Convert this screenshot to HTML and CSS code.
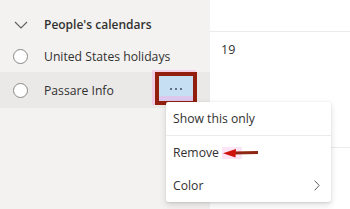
FILE: index.html
```html
<!DOCTYPE html>
<html>
<head>
<meta charset="utf-8">
<link rel="stylesheet" href="styles.css">
</head>
<body>
<div class="app">
  <aside class="sidebar">
    <div class="group-head">
      <svg class="chev" width="14" height="8" viewBox="0 0 14 8"><path d="M1 1 L7 7 L13 1" fill="none" stroke="#605e5c" stroke-width="1.1"/></svg>
      <span class="group-title">People's calendars</span>
    </div>
    <div class="cal-row">
      <span class="radio"></span>
      <span class="cal-name">United States holidays</span>
    </div>
    <div class="cal-row selected">
      <span class="radio"></span>
      <span class="cal-name">Passare Info</span>
      <span class="more-btn"><span class="more-inner"><i></i><i></i><i></i></span></span>
    </div>
  </aside>
  <main class="calendar">
    <div class="cal-header"></div>
    <div class="day-cell"><span class="day-num">19</span></div>
    <div class="day-cell second"></div>
  </main>
</div>
<div class="menu">
  <div class="menu-item divided">Show this only</div>
  <div class="menu-item">Remove</div>
  <div class="menu-item">Color
    <svg class="sub-chev" width="6" height="11" viewBox="0 0 6 11"><path d="M0.6 0.6 L5.2 5.5 L0.6 10.4" fill="none" stroke="#605e5c" stroke-width="1"/></svg>
  </div>
</div>
<svg class="arrow" width="40" height="16" viewBox="0 0 40 16">
  <rect x="1" y="2" width="20" height="12" fill="#fbd3f0" opacity="0.6"/>
  <path d="M12 8 L37 7.6" stroke="#8e2712" stroke-width="3" fill="none"/>
  <path d="M2 8.2 L15 4 L14.5 12.5 Z" fill="#d0140c"/>
</svg>
</body>
</html>
```
FILE: styles.css
```css
* { box-sizing: border-box; }
html, body { margin: 0; padding: 0; }
body {
  width: 350px;
  height: 209px;
  overflow: hidden;
  background: #ffffff;
  font-family: "Open Sans", "Noto Sans", sans-serif;
  color: #323130;
  position: relative;
}
.app {
  display: flex;
  height: 209px;
  overflow: hidden;
}
.sidebar {
  width: 210px;
  flex: none;
  background: #f3f2f1;
  padding-top: 8px;
}
.group-head {
  height: 32px;
  display: flex;
  align-items: center;
  padding-left: 14px;
}
.chev { margin-right: 16px; margin-top: 1px; }
.group-title {
  font-weight: 600;
  font-size: 12px;
}
.cal-row {
  height: 33px;
  display: flex;
  align-items: center;
  padding-left: 13px;
  font-size: 12.2px;
}
.cal-row.selected {
  background: #eae9e8;
  height: 36px;
  margin-top: -1px;
}
.radio {
  width: 15px;
  height: 15px;
  border-radius: 50%;
  border: 1px solid #8a8886;
  background: #ffffff;
  margin-right: 16px;
  flex: none;
}
.more-btn {
  margin-left: auto;
  margin-right: 13px;
  align-self: flex-start;
  width: 42px;
  height: 33px;
  border: 4px solid #921f0d;
  box-shadow: -2px -1px 0 1px rgba(250, 170, 225, 0.45);
  display: flex;
}
.more-inner {
  flex: 1;
  background: linear-gradient(#c7dff3 80%, #dcc8ec 80%);
  display: flex;
  align-items: center;
  justify-content: center;
  gap: 3px;
}
.more-inner i {
  width: 2px;
  height: 2px;
  border-radius: 50%;
  background: #3b4a63;
}
.calendar {
  flex: 1;
  display: flex;
  flex-direction: column;
  overflow: hidden;
}
.cal-header {
  height: 32px;
  border-bottom: 1px solid #edebe9;
  flex: none;
}
.day-cell {
  height: 116px;
  border-bottom: 1px solid #edebe9;
  padding: 5px 0 0 11px;
  flex: none;
}
.day-cell.second { border-bottom: none; flex: 1; height: auto; }
.day-num { font-size: 12.5px; }
.menu {
  position: absolute;
  left: 166px;
  top: 102px;
  width: 165px;
  height: 100px;
  background: #ffffff;
  border-radius: 2px;
  box-shadow: 0 3px 7px rgba(0, 0, 0, 0.13), 0 0.5px 2px rgba(0, 0, 0, 0.1);
  display: flex;
  flex-direction: column;
}
.menu-item {
  height: 33px;
  display: flex;
  align-items: center;
  padding-left: 7px;
  padding-right: 11px;
  font-size: 12.2px;
}
.menu-item.divided {
  height: 34px;
  border-bottom: 1px solid #edebe9;
}
.sub-chev { margin-left: auto; }
.arrow {
  position: absolute;
  left: 221px;
  top: 145px;
}
```
